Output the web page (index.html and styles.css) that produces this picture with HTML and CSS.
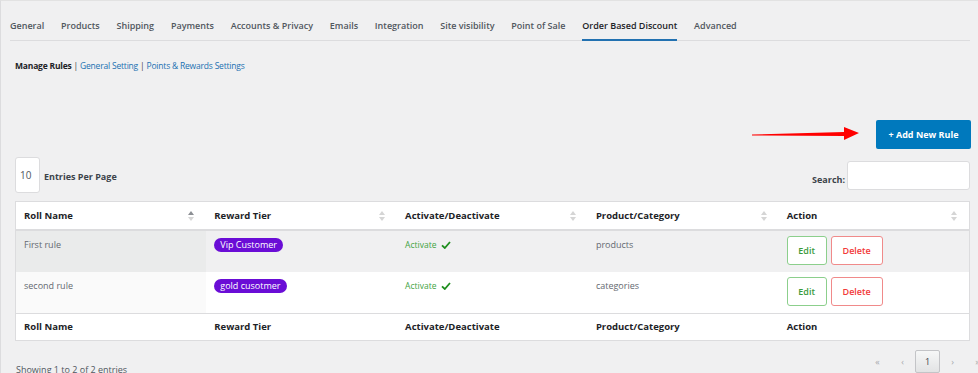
FILE: index.html
```html
<!DOCTYPE html>
<html lang="en">
<head>
    <meta charset="UTF-8">
    <meta name="viewport" content="width=device-width, initial-scale=1.0">
    <title>Order Based Discount - Settings</title>
    <link rel="stylesheet" href="styles.css">
</head>
<body>
    <div class="wrap">
        <nav class="tabs">
            <a class="tab" href="#">General</a>
            <a class="tab" href="#">Products</a>
            <a class="tab" href="#">Shipping</a>
            <a class="tab" href="#">Payments</a>
            <a class="tab" href="#">Accounts &amp; Privacy</a>
            <a class="tab" href="#">Emails</a>
            <a class="tab" href="#">Integration</a>
            <a class="tab" href="#">Site visibility</a>
            <a class="tab" href="#">Point of Sale</a>
            <a class="tab active" href="#">Order Based Discount</a>
            <a class="tab" href="#">Advanced</a>
        </nav>

        <div class="subnav">
            <strong>Manage Rules</strong> | <a href="#">General Setting</a> | <a href="#">Points &amp; Rewards Settings</a>
        </div>

        <div class="toolbar">
            <!-- flèche d'annotation vers le bouton -->
            <svg class="arrow" width="110" height="18" viewBox="0 0 110 18">
                <polygon points="0,9.5 92,7 92,2 107,8 92,15 92,11 0,10.5" fill="#ff0000"/>
            </svg>
            <button class="add-button">+ Add New Rule</button>
        </div>

        <div class="controls">
            <div class="length">
                <span class="length-box">10</span>
                <span class="length-label">Entries Per Page</span>
            </div>
            <label class="search"><span>Search:</span> <input type="text"></label>
        </div>

        <table class="rules">
            <thead>
                <tr>
                    <th class="sorted">Roll Name</th>
                    <th>Reward Tier</th>
                    <th>Activate/Deactivate</th>
                    <th>Product/Category</th>
                    <th>Action</th>
                </tr>
            </thead>
            <tbody>
                <tr class="odd">
                    <td class="sort-col">First rule</td>
                    <td><span class="badge">Vip Customer</span></td>
                    <td class="status">Activate <svg class="check" width="10" height="8" viewBox="0 0 10 8"><polyline points="1,4.3 3.8,7 9,1" fill="none" stroke="#1e8e1e" stroke-width="1.8"/></svg></td>
                    <td>products</td>
                    <td class="actions"><button class="btn-edit">Edit</button><button class="btn-delete">Delete</button></td>
                </tr>
                <tr>
                    <td class="sort-col">second rule</td>
                    <td><span class="badge">gold cusotmer</span></td>
                    <td class="status">Activate <svg class="check" width="10" height="8" viewBox="0 0 10 8"><polyline points="1,4.3 3.8,7 9,1" fill="none" stroke="#1e8e1e" stroke-width="1.8"/></svg></td>
                    <td>categories</td>
                    <td class="actions"><button class="btn-edit">Edit</button><button class="btn-delete">Delete</button></td>
                </tr>
            </tbody>
            <tfoot>
                <tr>
                    <th>Roll Name</th>
                    <th>Reward Tier</th>
                    <th>Activate/Deactivate</th>
                    <th>Product/Category</th>
                    <th>Action</th>
                </tr>
            </tfoot>
        </table>

        <div class="table-footer">
            <span class="info">Showing 1 to 2 of 2 entries</span>
            <div class="paging">
                <span class="page-link">&laquo;</span>
                <span class="page-link">&lsaquo;</span>
                <span class="page-current">1</span>
                <span class="page-link">&rsaquo;</span>
                <span class="page-link">&raquo;</span>
            </div>
        </div>
    </div>
</body>
</html>
```

FILE: styles.css
```css
body {
    margin: 0;
    font-family: 'Open Sans', 'Noto Sans', sans-serif;
    font-size: 9px;
    background-color: #f0f0f1;
    color: #3c434a;
    overflow: hidden;
}

.wrap {
    min-height: 373px;
    padding: 0 8px 0 14px;
    border-left: 1px solid #dcdcde;
    border-top: 1px solid #e2e2e2;
    box-sizing: border-box;
}

.tabs {
    display: flex;
    gap: 16.8px;
    margin-left: -5px;
    border-bottom: 1px solid #dcdcde;
}

.tab {
    padding: 18px 0 6px;
    line-height: 14px;
    font-size: 9px;
    font-weight: 600;
    color: #50575e;
    text-decoration: none;
    border-bottom: 2px solid transparent;
    margin-bottom: -1px;
}

.tab.active {
    color: #1d2327;
    border-bottom-color: #2271b1;
}

.subnav {
    margin-top: 18px;
    line-height: 14px;
    font-size: 8.5px;
    letter-spacing: -0.2px;
    color: #3c434a;
}

.subnav strong {
    color: #1d2327;
    font-weight: 700;
}

.subnav a {
    color: #2271b1;
    text-decoration: none;
}

.toolbar {
    position: relative;
    display: flex;
    justify-content: flex-end;
    margin-top: 47px;
}

.arrow {
    position: absolute;
    left: 737px;
    top: 5px;
}

.add-button {
    width: 95px;
    height: 29px;
    margin-right: -1px;
    border: none;
    border-radius: 2px;
    background-color: #0079bd;
    color: #fff;
    font-family: inherit;
    font-size: 9px;
    font-weight: 700;
}

.controls {
    display: flex;
    justify-content: space-between;
    align-items: flex-start;
    margin-top: 8px;
}

.length {
    display: flex;
    align-items: center;
    gap: 4px;
}

.length-box {
    width: 19px;
    height: 34px;
    line-height: 34px;
    padding-left: 4px;
    background-color: #fff;
    border: 1px solid #dcdcde;
    border-radius: 3px;
    color: #50575e;
    font-size: 10px;
}

.length-label {
    font-weight: 700;
    color: #3c434a;
    margin-top: 3px;
}

.search {
    display: flex;
    align-items: center;
    gap: 2px;
    margin-top: 4px;
    font-weight: 700;
    color: #3c434a;
}

.search span {
    margin-top: 7px;
}

.search input {
    width: 121px;
    height: 27px;
    margin: 0;
    padding: 0;
    border: 1px solid #dcdcde;
    border-radius: 3px;
    background-color: #fff;
}

.rules {
    width: 955px;
    margin-top: 8px;
    border-collapse: collapse;
    border: 1px solid #dcdcde;
    table-layout: fixed;
}

.rules th {
    text-align: left;
    padding: 6px 8px;
    line-height: 15px;
    font-size: 9.5px;
    font-weight: 700;
    color: #1d2327;
    background-color: #fff;
}

.rules thead th {
    position: relative;
    border-bottom: 2px solid #dcdcde;
}

/* flèches de tri */
.rules thead th::before,
.rules thead th::after {
    content: "";
    position: absolute;
    right: 12px;
    border-left: 3px solid transparent;
    border-right: 3px solid transparent;
}

.rules thead th::before {
    top: 9px;
    border-bottom: 4px solid #d5d5d5;
}

.rules thead th::after {
    top: 15px;
    border-top: 4px solid #d5d5d5;
}

.rules thead th.sorted::before {
    border-bottom-color: #8c8f94;
}

.rules tfoot th {
    padding: 5px 8px 6px;
    border-top: 1px solid #dcdcde;
}

.rules td {
    height: 27px;
    padding: 7px 8px;
    vertical-align: top;
    line-height: 14px;
    color: #646970;
    background-color: #fff;
}

.rules tr.odd td {
    background-color: #f0f0f1;
}

.rules td.sort-col {
    background-color: #fafafa;
}

.rules tr.odd td.sort-col {
    background-color: #eaebeb;
}

.rules td.status {
    color: #3fa33f;
    font-size: 8.5px;
}

.check {
    margin-left: 2px;
    vertical-align: -1px;
}

.badge {
    display: inline-block;
    padding: 0 6px;
    line-height: 14px;
    border-radius: 8px;
    background-color: #6a0dd6;
    color: #fff;
}

.rules td.actions {
    padding-top: 5px;
    padding-bottom: 5px;
    white-space: nowrap;
}

.btn-edit,
.btn-delete {
    height: 29px;
    margin-right: 4px;
    background-color: #fff;
    border-radius: 3px;
    font-family: inherit;
    font-size: 9px;
    font-weight: 600;
}

.btn-edit {
    width: 40px;
    border: 1px solid #8ccf8c;
    color: #3a9a3a;
}

.btn-delete {
    width: 52px;
    border: 1px solid #f08a8a;
    color: #f23a3a;
}

.table-footer {
    display: flex;
    justify-content: space-between;
    align-items: flex-start;
}

.info {
    margin-top: 22px;
    margin-left: 1px;
    color: #50575e;
    line-height: 14px;
}

.paging {
    display: flex;
    align-items: center;
    margin-top: 9px;
    margin-right: -20px;
}

.page-link {
    width: 25px;
    text-align: center;
    color: #a7aaad;
    font-size: 9px;
}

.page-current {
    width: 23px;
    height: 21px;
    line-height: 21px;
    text-align: center;
    border: 1px solid #c3c4c7;
    border-radius: 2px;
    background: linear-gradient(#f6f7f7, #e2e3e4);
    color: #3c434a;
}
```
